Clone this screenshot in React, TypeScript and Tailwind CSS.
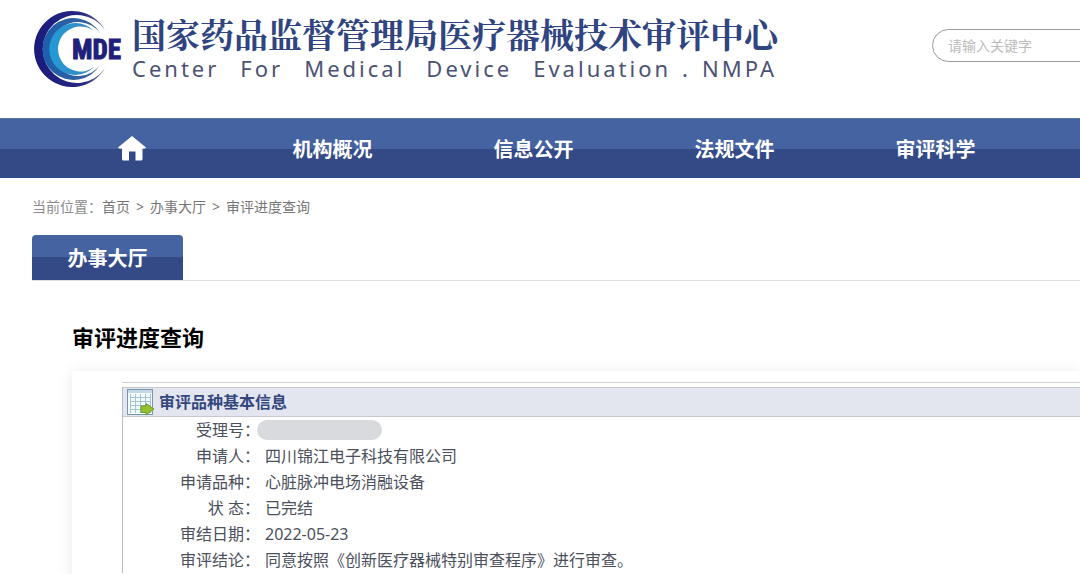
const navItems = ["机构概况", "信息公开", "法规文件", "审评科学"];

const rows = [
  { label: "受理号：", value: "" },
  { label: "申请人：", value: "四川锦江电子科技有限公司" },
  { label: "申请品种：", value: "心脏脉冲电场消融设备" },
  { label: "状 态：", value: "已完结" },
  { label: "审结日期：", value: "2022-05-23" },
  { label: "审评结论：", value: "同意按照《创新医疗器械特别审查程序》进行审查。" },
];

function Logo() {
  return (
    <svg viewBox="0 0 92 82" className="h-[82px] w-[92px] shrink-0" role="img" aria-label="CMDE">
      <defs>
        <linearGradient id="ring" x1="0" y1="0" x2="1" y2="0">
          <stop offset="0" stopColor="#1a1a7c" />
          <stop offset="0.7" stopColor="#262a82" />
          <stop offset="1" stopColor="#6d6f98" />
        </linearGradient>
        <linearGradient id="middle" x1="0" y1="0" x2="1" y2="0">
          <stop offset="0" stopColor="#1d5fae" />
          <stop offset="1" stopColor="#3a5f96" />
        </linearGradient>
        <linearGradient id="inner" x1="0" y1="0" x2="1" y2="0">
          <stop offset="0" stopColor="#229bd6" />
          <stop offset="1" stopColor="#3b86bd" />
        </linearGradient>
      </defs>
      <path d="M73 22A38 38 0 1 0 73 60A34 34 0 1 1 73 22Z" fill="url(#ring)" />
      <path d="M68 25A31 31 0 1 0 68 57A27 27 0 1 1 68 25Z" fill="url(#middle)" />
      <path d="M62 23A26 26 0 1 0 62 59A22.500 22.500 0 1 1 62 23Z" fill="url(#inner)" />
      <path d="M40 27H92V54H40Z" fill="#fff" />
      <text
        x="40"
        y="51"
        fill="#20207a"
        stroke="#20207a"
        strokeWidth="1"
        className="font-['Liberation_Sans_Narrow','Roboto_Condensed','DejaVu_Sans_Condensed',sans-serif] text-[27px] font-bold"
      >
        MDE
      </text>
    </svg>
  );
}

function TableIcon() {
  return (
    <svg viewBox="0 0 28 28" className="h-7 w-7 shrink-0" aria-hidden="true">
      <rect x="0.500" y="1.500" width="25" height="25" fill="#f5fbfd" stroke="#7897a8" />
      <rect x="1" y="2" width="24" height="3" fill="#c3dae4" />
      <path
        d="M3 9.500H24M3 13.500H24M3 17.500H24M3 21.500H24M3.500 6V25M8.500 6V25M13.500 6V25M18.500 6V25M23.500 6V25"
        stroke="#9fc4d4"
        fill="none"
      />
      <path d="M14 18H19V15.500L27 21L19 27V24.500H14Z" fill="#93c02f" stroke="#719b26" strokeLinejoin="round" />
    </svg>
  );
}

export default function App() {
  return (
    <div className="min-h-screen overflow-hidden bg-white font-['Noto_Sans','Noto_Sans_CJK_SC',sans-serif] text-[#4b505c]">
      <header className="flex h-[118px] items-start justify-between">
        <div className="flex pl-8 pt-2">
          <Logo />
          <div className="pl-2 pt-1 whitespace-nowrap">
            <h1 className="font-['Noto_Serif_CJK_SC','Noto_Sans_CJK_SC',serif] text-[34px] leading-[44px] font-bold text-[#2f4480]">
              国家药品监督管理局医疗器械技术审评中心
            </h1>
            <p className="flex gap-[21px] text-[22px] leading-6 tracking-[3px] text-[#4c5274]">
              <span>Center</span>
              <span>For</span>
              <span>Medical</span>
              <span>Device</span>
              <span className="flex gap-[11px]">
                <span>Evaluation</span>
                <span>.</span>
                <span>NMPA</span>
              </span>
            </p>
          </div>
        </div>
        <form className="-mr-8 shrink-0 pt-[29px]">
          <input
            type="search"
            aria-label="请输入关键字"
            placeholder="请输入关键字"
            className="h-[33px] w-[180px] rounded-full border border-[#999] bg-white px-[15px] text-sm outline-none placeholder:text-[#bcbcbc]"
          />
        </form>
      </header>

      <nav className="border-t border-[#5c719f] bg-linear-to-b from-[#4563a1] from-50% to-[#334a87] to-50% pl-8">
        <ul className="-ml-px flex h-[59px] items-center text-xl font-bold text-white">
          <li className="w-[201px] shrink-0">
            <a href="#home" aria-label="首页" className="flex justify-center">
              <svg viewBox="0 0 28 26" className="h-[26px] w-7" aria-hidden="true">
                <path d="M14 0L28 11.500Q27.500 13 24.500 12.500V23Q24.500 24.500 23 24.500H17.500V15.500H11V24.500H5.500Q4 24.500 4 23V12.500Q0.500 13 0 11.500Z" fill="currentColor" />
              </svg>
            </a>
          </li>
          {navItems.map((item) => (
            <li key={item} className="w-[201px] shrink-0 pt-0.5 text-center">
              <a href="#nav">{item}</a>
            </li>
          ))}
        </ul>
      </nav>

      <main className="pl-8">
        <nav aria-label="当前位置" className="flex pt-[19px] text-sm leading-5 text-[#777]">
          <span className="text-[#8c8c8c]">当前位置：</span>
          <span className="flex gap-[6px]">
            <a href="#home">首页</a>
            <span>&gt;</span>
            <a href="#hall">办事大厅</a>
            <span>&gt;</span>
            <a href="#progress">审评进度查询</a>
          </span>
        </nav>

        <div className="mt-[18px] flex border-b border-[#dfdfdf]">
          <h2 className="h-[45px] w-[151px] rounded-t bg-linear-to-b from-[#4563a1] from-50% to-[#334a87] to-50% text-center text-xl leading-[47px] font-bold text-white">
            办事大厅
          </h2>
        </div>

        <section className="pl-10 pt-10">
          <h3 className="text-[22px] leading-8 font-bold text-black">审评进度查询</h3>
          <div className="mt-[18px] min-h-[220px] pt-[11px] pl-[50px] shadow-[0_0_14px_rgba(0,0,0,0.08)]">
            <div className="border-t border-[#d2d2d4] pt-1">
              <div className="border-l border-[#b9bbc0]">
                <div className="flex h-[30px] items-center gap-1 border-t border-b border-[#c6c8ce] bg-[#e3e5ef] pl-1">
                  <TableIcon />
                  <h4 className="text-base font-bold text-[#34487e]">审评品种基本信息</h4>
                </div>
                <table className="w-full border-collapse text-base">
                  <tbody>
                    {rows.map((row) => (
                      <tr key={row.label} className="h-[26px] leading-[26px]">
                        <th scope="row" className="w-[137px] p-0 text-right font-normal whitespace-nowrap">
                          {row.label}
                        </th>
                        <td className="p-0 pl-[5px] whitespace-nowrap">
                          {row.value || (
                            <div className="-ml-2 h-5 w-[125px] rounded-full bg-[#d9dadd]" />
                          )}
                        </td>
                      </tr>
                    ))}
                  </tbody>
                </table>
              </div>
            </div>
          </div>
        </section>
      </main>
    </div>
  );
}
